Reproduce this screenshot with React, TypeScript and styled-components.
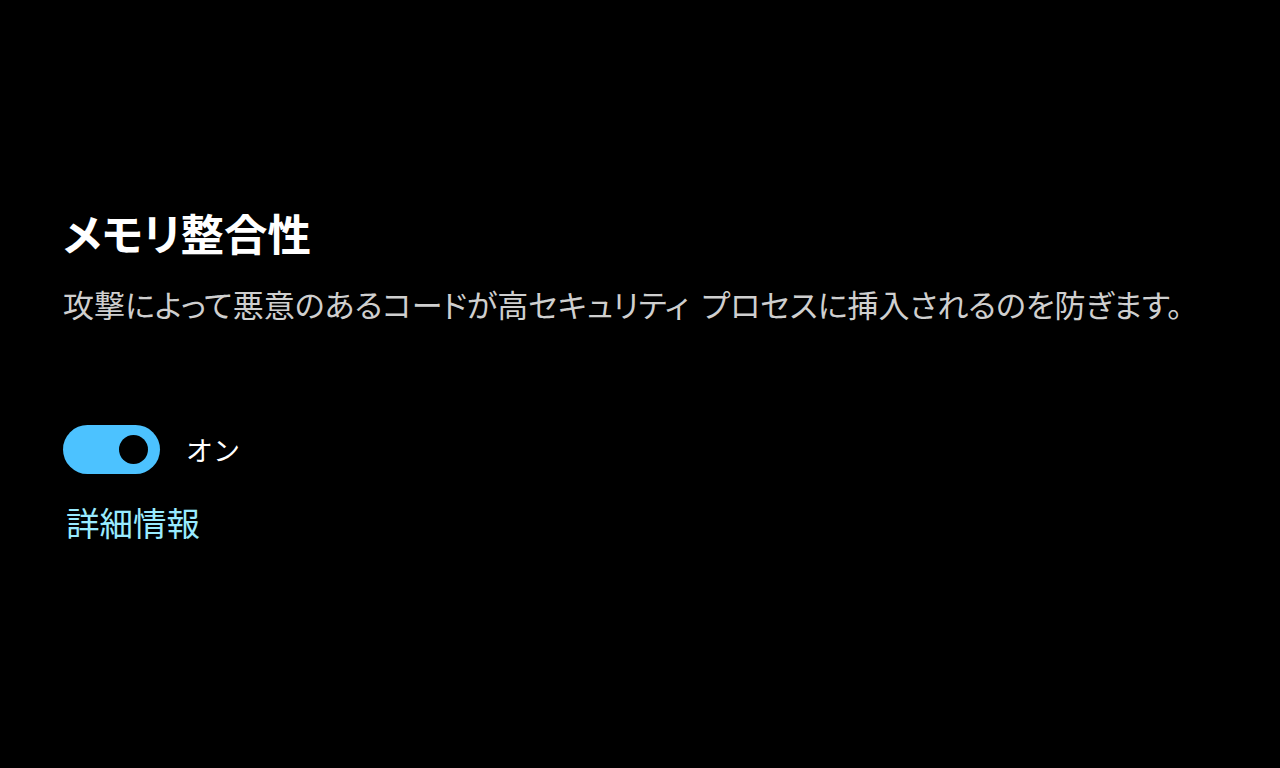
import React, { FC, useState } from "react";
import styled, { createGlobalStyle } from "styled-components";

const GlobalStyle = createGlobalStyle`
  html, body {
    margin: 0;
    padding: 0;
    background: #000;
  }
  body {
    font-family: "Noto Sans CJK JP", "Noto Sans", sans-serif;
  }
`;

// ページ全体
const Page = styled.div`
  width: 1280px;
  height: 768px;
  background: #000;
  display: flex;
  flex-direction: column;
  padding: 203px 0 0 63px;
  box-sizing: border-box;
`;

const Title = styled.h1`
  margin: 0;
  color: #fff;
  font-size: 43.5px;
  font-weight: 700;
  line-height: 60px;
  font-feature-settings: "palt";
`;

const Description = styled.p`
  margin: 18px 0 0;
  color: #cfcfcf;
  font-size: 31px;
  font-weight: 400;
  line-height: 46px;
  font-feature-settings: "palt";
  word-spacing: 6px;
`;

const ToggleRow = styled.div`
  display: flex;
  align-items: center;
  gap: 26px;
  margin-top: 98px;
`;

const Track = styled.button<{ on: boolean }>`
  position: relative;
  width: 97px;
  height: 49px;
  border-radius: 25px;
  border: none;
  padding: 0;
  cursor: pointer;
  background: ${(p) => (p.on ? "#4cc2ff" : "transparent")};
  box-shadow: ${(p) => (p.on ? "none" : "inset 0 0 0 2px #cfcfcf")};
`;

// つまみ
const Knob = styled.span<{ on: boolean }>`
  position: absolute;
  top: 10px;
  left: ${(p) => (p.on ? "56px" : "12px")};
  width: 29px;
  height: 29px;
  border-radius: 50%;
  background: ${(p) => (p.on ? "#000" : "#cfcfcf")};
`;

const ToggleLabel = styled.span`
  color: #fff;
  font-size: 27px;
  line-height: 40px;
`;

const Link = styled.a`
  margin-top: 25px;
  color: #99ebff;
  font-size: 33.5px;
  line-height: 46px;
  text-decoration: none;
  cursor: pointer;
  align-self: flex-start;
  margin-left: 3px;
`;

const App: FC = () => {
  const [on, setOn] = useState(true);

  return (
    <>
      <GlobalStyle />
      <Page>
        <Title>メモリ整合性</Title>
        <Description>
          攻撃によって悪意のあるコードが高セキュリティ プロセスに挿入されるのを防ぎます。
        </Description>
        <ToggleRow>
          <Track on={on} onClick={() => setOn(!on)}>
            <Knob on={on} />
          </Track>
          <ToggleLabel>{on ? "オン" : "オフ"}</ToggleLabel>
        </ToggleRow>
        <Link>詳細情報</Link>
      </Page>
    </>
  );
};

export default App;
